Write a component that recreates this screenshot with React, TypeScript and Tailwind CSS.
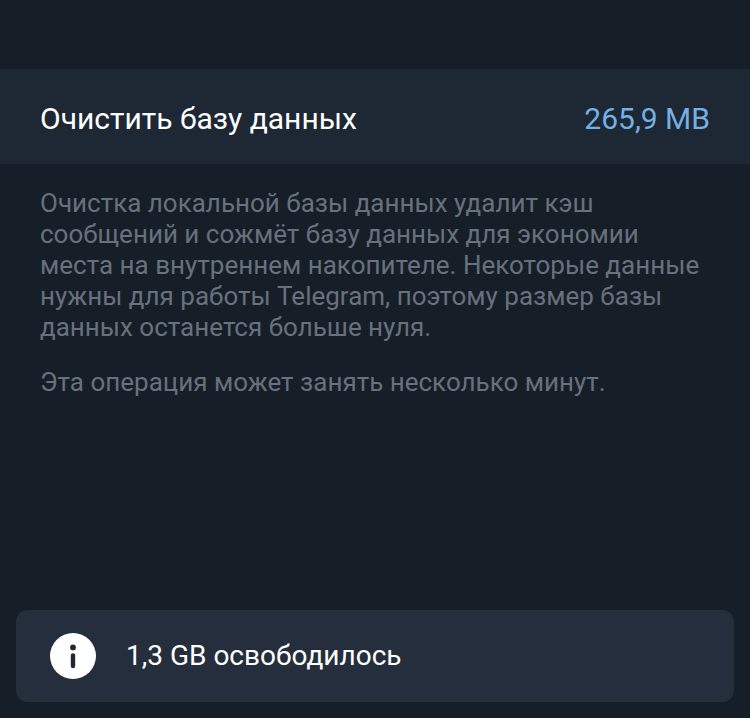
export default function App() {
  return (
    <div className="flex min-h-screen flex-col bg-[#161e27] pt-[69px] font-[Roboto,sans-serif]">
      <button
        type="button"
        className="flex h-[95px] w-full items-center justify-between bg-[#1e2734] px-10 pt-1 text-left text-[30px]"
      >
        <span className="text-white">Очистить базу данных</span>
        <span className="text-[#74b0e4]">265,9 MB</span>
      </button>

      <div className="flex flex-col gap-6 px-10 pt-6 text-[26px] leading-[31px] text-[#68717d]">
        <p>
          Очистка локальной базы данных удалит кэш сообщений и сожмёт базу данных для экономии места
          на внутреннем накопителе. Некоторые данные нужны для работы Telegram, поэтому размер базы
          данных останется больше нуля.
        </p>
        <p>Эта операция может занять несколько минут.</p>
      </div>

      <div
        role="status"
        className="mx-4 mt-auto mb-4 flex h-[92px] items-center gap-[30px] rounded-xl bg-[#252e3c] px-[34px] text-[28px] text-white"
      >
        <svg viewBox="0 0 46 46" className="size-[46px] shrink-0" aria-hidden="true">
          <circle cx="23" cy="23" r="23" fill="#fff" />
          <circle cx="23" cy="14.4" r="2.9" fill="#1f2730" />
          <path d="M23 22.5v10.5" stroke="#1f2730" strokeWidth="4.4" strokeLinecap="round" />
        </svg>
        <span>1,3 GB освободилось</span>
      </div>
    </div>
  );
}
